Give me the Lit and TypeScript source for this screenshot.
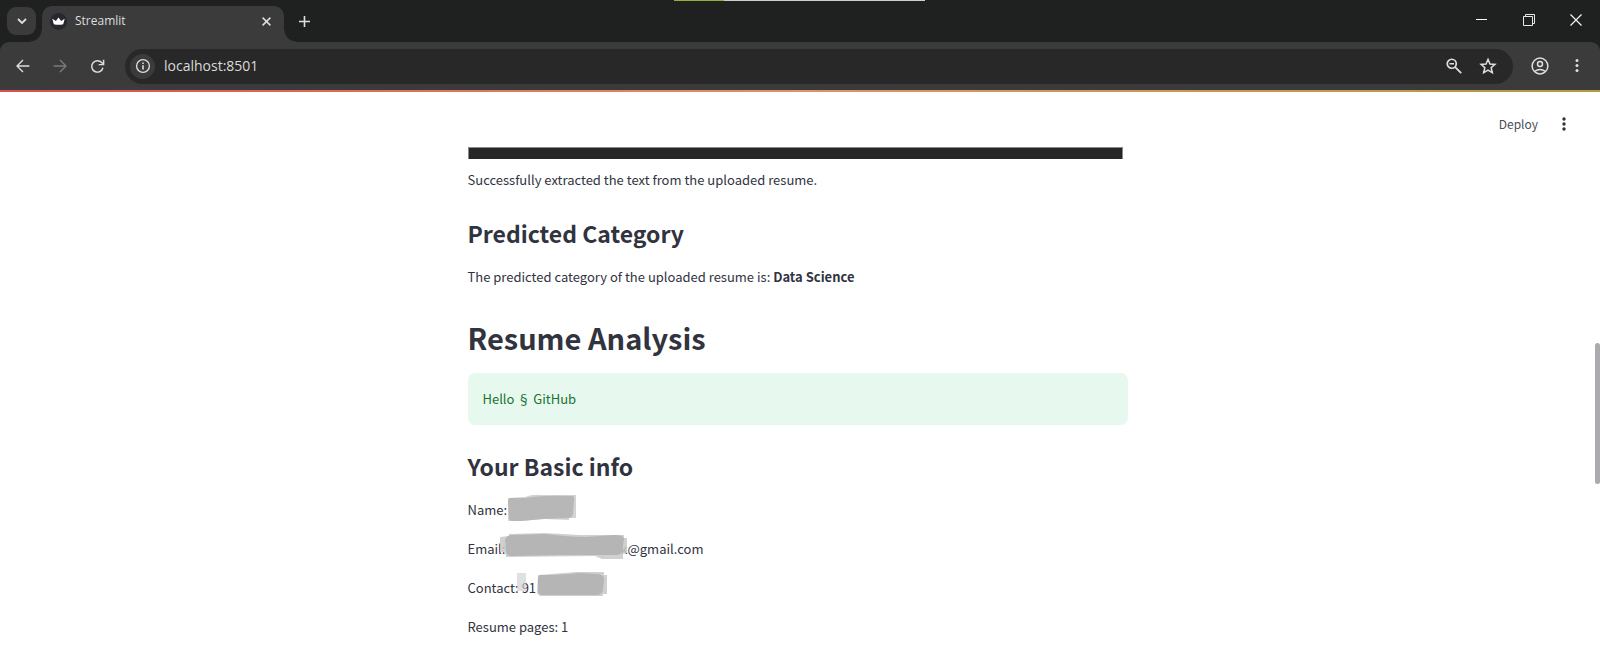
import { LitElement, html, css, svg } from "lit";
import { customElement } from "lit/decorators.js";

@customElement("browser-bar")
class BrowserBar extends LitElement {
  static styles = css`
    :host { display: block; background: #1f2120; color: #dedede; }
    button { font: inherit; color: inherit; background: none; border: 0; padding: 0; margin: 0; display: flex; align-items: center; justify-content: center; flex: none; }
    svg { display: block; flex: none; }
    .tabs { position: relative; display: flex; height: 42px; align-items: flex-start; }
    .progress { position: absolute; top: 0; left: 42.125%; width: 15.6875%; height: 1px; background: linear-gradient(to right, #8fb13c 20%, #c9cfcb 20%); }
    .search { width: 29px; height: 28px; margin: 7px 6px 0 7px; border-radius: 9px; background: #3b3b3b; }
    .tab { position: relative; display: flex; align-items: center; width: 242px; height: 36px; margin-top: 6px; box-sizing: border-box; padding: 0 11px 6px 8px; border-radius: 10px 10px 0 0; background: #3b3b3b; }
    .tab::before, .tab::after { content: ""; position: absolute; bottom: 0; width: 12px; height: 12px; }
    .tab::before { right: 100%; background: radial-gradient(circle at 0 0, transparent 11px, #3b3b3b 12px); }
    .tab::after { left: 100%; background: radial-gradient(circle at 100% 0, transparent 11px, #3b3b3b 12px); }
    .title { flex: 1; margin-left: 8px; font: 12px/20px "Open Sans", sans-serif; }
    .add { width: 30px; height: 30px; margin: 6px 0 0 5px; }
    .window { display: flex; margin: 0 1px 0 auto; }
    .window button { width: 47px; height: 40px; }
    .tools { display: flex; align-items: center; height: 48px; background: #3b3b3b; border-radius: 9px 9px 0 0; padding: 0 8px; }
    .nav { width: 30px; height: 30px; margin-right: 7px; }
    .off { color: #7b7b7b; }
    .address { flex: 1; display: flex; align-items: center; height: 35px; border-radius: 18px; background: #282828; margin: 0 11px 0 6px; padding: 0 13px 0 5px; min-width: 0; }
    .site { width: 25px; height: 25px; border-radius: 50%; background: #3b3b3b; }
    .url { flex: 1; min-width: 0; margin-left: 9px; padding: 0; color: #d8dadb; background: none; border: 0; outline: 0; font: 14px/20px "Open Sans", sans-serif; }
    .small { width: 24px; height: 24px; margin-left: 10px; }
    .user { width: 32px; height: 32px; }
    .menu { width: 30px; height: 32px; margin-left: 6px; }
  `;

  private glyph(size: number, body: unknown, width = 1.7) {
    return html`<svg width=${size} height=${size} viewBox="0 0 20 20" fill="none" stroke="currentColor" stroke-width=${width} aria-hidden="true">${body}</svg>`;
  }

  render() {
    return html`
      <div class="tabs">
        <div class="progress"></div>
        <button class="search" aria-label="Search tabs">${this.glyph(16, svg`<path d="M5 7.500l5 5 5-5" />`, 2.3)}</button>
        <div class="tab">
          <svg width="17" height="17" viewBox="0 0 17 17" aria-hidden="true">
            <circle cx="8.500" cy="8.500" r="8.500" fill="#262730" />
            <path d="M2.300 5.800l3.600 2.200 2.600-3.400 2.600 3.400 3.600-2.200-1.500 5.400q-4.700 1-9.400 0z" fill="#fff" />
          </svg>
          <span class="title">Streamlit</span>
          <button aria-label="Close tab">${this.glyph(13, svg`<path d="M4 4l12 12M16 4L4 16" />`, 2.3)}</button>
        </div>
        <button class="add" aria-label="New tab">${this.glyph(17, svg`<path d="M10 3.500v13M3.500 10h13" />`, 1.9)}</button>
        <div class="window">
          <button aria-label="Minimize"><svg width="12" height="12" fill="none" stroke="#fff"><path d="M0 5.500h11" /></svg></button>
          <button aria-label="Restore"><svg width="12" height="12" fill="none" stroke="#e8e8e8"><path d="M.5 2.500h9v9h-9zM2.500 2V.5h9v9H10" /></svg></button>
          <button aria-label="Close window"><svg width="12" height="12" fill="none" stroke="#f2f2f2" stroke-width="1.200"><path d="M.5.5l11 11M11.500.5l-11 11" /></svg></button>
        </div>
      </div>
      <div class="tools">
        <button class="nav" aria-label="Back">${this.glyph(16, svg`<path d="M18 10H3M10 2.500L2.500 10l7.500 7.500" />`)}</button>
        <button class="nav off" aria-label="Forward">${this.glyph(16, svg`<path d="M2 10h15M10 2.500l7.500 7.500-7.500 7.500" />`)}</button>
        <button class="nav" aria-label="Reload">${this.glyph(17, svg`<path d="M16.400 11.500A6.700 6.700 0 1 1 14.900 5.400L17 7.600M17.200 2v5.800h-5.800" />`)}</button>
        <div class="address">
          <button class="site" aria-label="Site information">${this.glyph(16, svg`<circle cx="10" cy="10" r="8" /><path d="M10 9v5.500M10 5.500v2" stroke-width="2" />`)}</button>
          <input class="url" aria-label="Address" value="localhost:8501" />
          <button class="small" aria-label="Zoom">${this.glyph(18, svg`<circle cx="7.500" cy="7.500" r="5" /><path d="M5 7.500h5M11 11l7 7" />`, 1.9)}</button>
          <button class="small" aria-label="Bookmark">${this.glyph(18, svg`<path d="M10 2.600l2.200 5.100 5.500.5-4.200 3.700 1.300 5.500-4.800-2.900-4.800 2.900 1.300-5.500-4.200-3.700 5.500-.5z" />`, 1.7)}</button>
        </div>
        <button class="user" aria-label="Profile">${this.glyph(20, svg`<circle cx="10" cy="10" r="7.900" /><circle cx="10" cy="8" r="2.500" /><path d="M4.500 15.500q5.500-4.200 11 0" />`, 1.5)}</button>
        <button class="menu" aria-label="Browser menu"><svg width="4" height="16" viewBox="0 0 4 16" fill="currentColor"><circle cx="2" cy="2.500" r="1.500" /><circle cx="2" cy="7.500" r="1.500" /><circle cx="2" cy="12.500" r="1.500" /></svg></button>
      </div>
    `;
  }
}

@customElement("app-root")
class AppRoot extends LitElement {
  static styles = css`
    :host { display: block; position: relative; min-height: 100vh; background: #fff; color: #31333f; font: 13px/24px "Noto Sans CJK SC", "Noto Sans CJK JP", sans-serif; }
    .stripe { height: 2px; background: linear-gradient(to right, #d8504f, #dd9468 50%, #b39a45); }
    .actions { position: absolute; right: 28px; top: 112px; display: flex; align-items: center; gap: 18px; }
    .actions button { font: inherit; font-size: 12px; line-height: 24px; color: #4b4d58; border: 0; background: none; padding: 0; display: flex; align-items: center; justify-content: center; }
    .actions .more { width: 16px; height: 24px; color: #31333f; }
    .scroll { position: absolute; right: 0; top: 343px; width: 5px; height: 141px; border-radius: 3px; background: #aaaaaf; }
    main { max-width: 660px; margin: 0 auto; padding: 55px 5px 30px 0; }
    .dark { height: 12px; margin-right: 5px; box-sizing: border-box; border: 1px solid #8a8a8a; border-width: 1px 1px 0; background: #262626; }
    p { margin: 0 0 15px; position: relative; }
    .first { margin-top: 9px; }
    h1, h2 { font-weight: 600; margin: 0; }
    h2 { font-size: 23px; line-height: 32px; margin: 25px 0 16px; }
    h1 { font-size: 29px; line-height: 44px; margin: 26px 0 14px; }
    .alert { border-radius: 7px; padding: 14px 15px; background: #e7f9ee; color: #177233; }
    .smudge { position: absolute; top: -4px; display: block; overflow: visible; }
    .name { left: 39px; }
    .email { left: 32px; }
    .contact { left: 48px; }
    .domain { margin-left: 112px; }
  `;

  render() {
    return html`
      <browser-bar></browser-bar>
      <div class="stripe"></div>
      <div class="actions">
        <button>Deploy</button>
        <button class="more" aria-label="Main menu"><svg width="4" height="14" viewBox="0 0 4 14" fill="currentColor"><circle cx="2" cy="2" r="1.700" /><circle cx="2" cy="7" r="1.700" /><circle cx="2" cy="12" r="1.700" /></svg></button>
      </div>
      <div class="scroll"></div>
      <main>
        <div class="dark"></div>
        <p class="first">Successfully extracted the text from the uploaded resume.</p>
        <h2>Predicted Category</h2>
        <p>The predicted category of the uploaded resume is: <strong>Data Science</strong></p>
        <h1>Resume Analysis</h1>
        <div class="alert" role="status">Hello § GitHub</div>
        <h2>Your Basic info</h2>
        <p>Name:
          <svg class="smudge name" width="69" height="28" viewBox="0 0 69 28" aria-hidden="true">
            <path d="M1 4L18 3Q25 0 35 1H69V24H62V26L38 25 14 27H1z" fill="#d3d3d3" />
            <path d="M3 4L19 4Q35 1 65 2Q68 2 67 6L66 20Q65 24 62 24L35 25 14 27H5Q2 27 2 23L1 8Q1 4 3 4z" fill="#b7b7b7" />
          </svg>
        </p>
        <p>Email: <span class="domain">k@gmail.com</span>
          <svg class="smudge email" width="128" height="27" viewBox="0 0 128 27" aria-hidden="true">
            <path d="M0 4L9 3V1L45 0 80 2H124V5H127V20L123 21V26H102L95 23 6 24 5 19H0z" fill="#c8c8c8" fill-opacity=".85" />
            <path d="M5 7Q7 2 12 2L45 1Q70 4 85 4L115 2Q124 2 124 6L122 18Q121 22 116 22H98L60 22 12 23Q6 23 6 18z" fill="#b5b5b5" />
          </svg>
        </p>
        <p>Contact: 91
          <svg class="smudge contact" width="91" height="24" viewBox="0 0 91 24" aria-hidden="true">
            <path d="M1 1H10V19H1z" fill="#cfcfcf" fill-opacity=".65" />
            <path d="M22 3L61 0H88V3H91V22H87V24H24L21 21z" fill="#cfcfcf" />
            <path d="M25 3Q45 3 62 1L82 2Q88 3 88 7L87 18Q86 23 80 23H27Q22 23 22 19V7Q22 3 25 3z" fill="#b5b5b5" />
          </svg>
        </p>
        <p>Resume pages: 1</p>
      </main>
    `;
  }
}
